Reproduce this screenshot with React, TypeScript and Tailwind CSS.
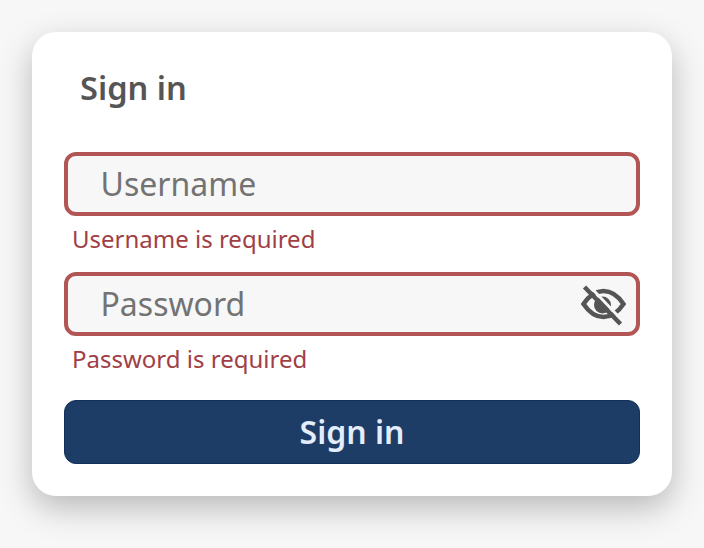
import React from "react";

function EyeOff() {
  return (
    <svg viewBox="0 0 48 48" className="w-12 h-12" fill="none">
      <path
        d="M3.500 24c5-7.500 11.500-13 20-13s15 5.500 20 13c-5 7.500-11.500 13-20 13S8.500 31.500 3.500 24Z"
        stroke="#555555"
        strokeWidth="4.500"
      />
      <circle cx="22.500" cy="25" r="8.500" fill="#555555" />
      <path d="M8.500 5l36 38" stroke="#f7f7f7" strokeWidth="3" />
      <path d="M4.500 7l36 37" stroke="#555555" strokeWidth="4.500" />
    </svg>
  );
}

function Field({
  label,
  error,
  children,
}: {
  label: string;
  error: string;
  children?: React.ReactNode;
}) {
  return (
    <div className="flex flex-col">
      <div className="flex items-center justify-between h-16 rounded-xl border-4 border-[#b25555] bg-[#f7f7f7] pl-[32.5px] pr-[8px]">
        <span className="text-[32px] text-[#737373]">{label}</span>
        {children}
      </div>
      <p className="mt-[7px] mb-px pl-2 text-[24px] leading-[32px] text-[#a04046]">{error}</p>
    </div>
  );
}

export default function App() {
  return (
    <div
      className="h-[548px] w-[704px] bg-[#f7f7f7] p-8"
      style={{ fontFamily: '"Noto Sans", sans-serif' }}
    >
      <div className="flex h-[464px] flex-col rounded-3xl bg-white px-8 pt-8 shadow-[0_12px_32px_rgba(0,0,0,0.25)]">
        <h1 className="pl-4 text-[32.6px] leading-[48px] font-semibold text-[#555555]">Sign in</h1>
        <div className="mt-[40px] flex flex-col gap-4">
          <Field label="Username" error="Username is required" />
          <Field label="Password" error="Password is required">
            <EyeOff />
          </Field>
        </div>
        <button className="mt-6 h-16 rounded-xl border border-[#12305a] bg-[#1e3d66] text-[32px] font-semibold text-[#e3edfb]">
          Sign in
        </button>
      </div>
    </div>
  );
}
